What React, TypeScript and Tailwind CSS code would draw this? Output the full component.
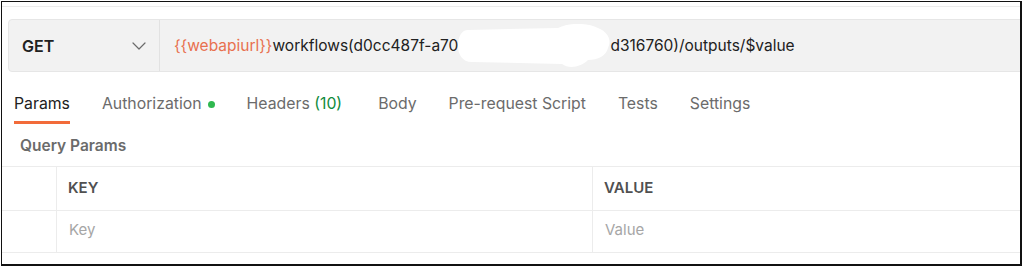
import { ChevronDown } from "lucide-react";

const tabs = [
  { label: "Params", active: true },
  { label: "Authorization", dot: true },
  { label: "Headers", count: "(10)", extra: true },
  { label: "Body" },
  { label: "Pre-request Script" },
  { label: "Tests" },
  { label: "Settings" },
];

// white smudge that hides part of the id
function Redaction() {
  return (
    <svg width="152" height="44" viewBox="0 0 152 44" className="shrink-0 -my-[10px]">
      <path
        d="M10 6 L100 4 C112 -2 130 -1 140 4 C150 8 154 16 150 24 C148 32 140 36 130 36 C124 42 112 46 104 40 L14 38 C4 38 0 30 0 22 C0 12 4 6 10 6 Z"
        fill="#ffffff"
      />
    </svg>
  );
}

export default function App() {
  return (
    <div className="w-[1024px] h-[267px] bg-white p-px font-['Inter',sans-serif]">
      <div className="w-[1021px] h-[265px] border border-[#111] border-r-2 border-b-2 overflow-hidden flex flex-col">
        <div className="h-[5px] border-b border-[#ececec] shrink-0" />

        {/* request bar */}
        <div className="mt-[12px] ml-[6px] -mr-4 h-[53px] shrink-0 flex bg-[#f2f2f2] border border-[#e6e6e6] rounded-[4px]">
          <div className="w-[151px] shrink-0 flex items-center justify-between pl-[13px] pr-[8px] border-r border-[#e2e2e2]">
            <span className="text-[16px] font-semibold text-[#212121]">GET</span>
            <ChevronDown size={24} strokeWidth={1.2} className="text-[#6b6b6b]" />
          </div>
          <div className="flex items-center pl-[14px] text-[15.5px] text-[#212121] whitespace-nowrap">
            <span className="text-[#e8704f]">{"{{webapiurl}}"}</span>
            <span>workflows(d0cc487f-a70</span>
            <Redaction />
            <span>d316760)/outputs/$value</span>
          </div>
        </div>

        {/* tabs */}
        <div className="flex items-end gap-[32px] pl-[12px] mt-[15px] h-[37px] shrink-0">
          {tabs.map((t) => (
            <div
              key={t.label}
              className={`h-full flex items-center gap-[6px] border-b-[3px] text-[15.8px] whitespace-nowrap ${
                t.active ? "border-[#f26b3a] text-[#212121]" : "border-transparent text-[#6b6b6b]"
              } ${t.extra ? "pr-[4px]" : ""}`}
            >
              <span>
                {t.label}
                {t.count && <span className="text-[#0f8a3c]"> {t.count}</span>}
              </span>
              {t.dot && <span className="w-[7px] h-[7px] rounded-full bg-[#2fb84f]" />}
            </div>
          ))}
        </div>

        <div className="pl-[18px] pt-[10px] h-[42px] shrink-0 text-[15.5px] font-semibold text-[#6b6b6b]">
          Query Params
        </div>

        {/* params table */}
        <div className="border-t border-[#ececec] shrink-0">
          <div className="grid grid-cols-[55px_536px_1fr] h-[44px] border-b border-[#ececec]">
            <div className="border-r border-[#ececec]" />
            <div className="border-r border-[#ececec] flex items-center pl-[11px] text-[15px] font-semibold text-[#505050]">KEY</div>
            <div className="flex items-center pl-[11px] text-[15px] font-semibold text-[#505050]">VALUE</div>
          </div>
          <div className="grid grid-cols-[55px_536px_1fr] h-[42px] border-b border-[#ececec]">
            <div className="border-r border-[#ececec]" />
            <div className="border-r border-[#ececec] flex items-center pb-[3px] pl-[12px] text-[15px] text-[#a6a6a6]">Key</div>
            <div className="flex items-center pb-[3px] pl-[12px] text-[15px] text-[#a6a6a6]">Value</div>
          </div>
        </div>
      </div>
    </div>
  );
}
